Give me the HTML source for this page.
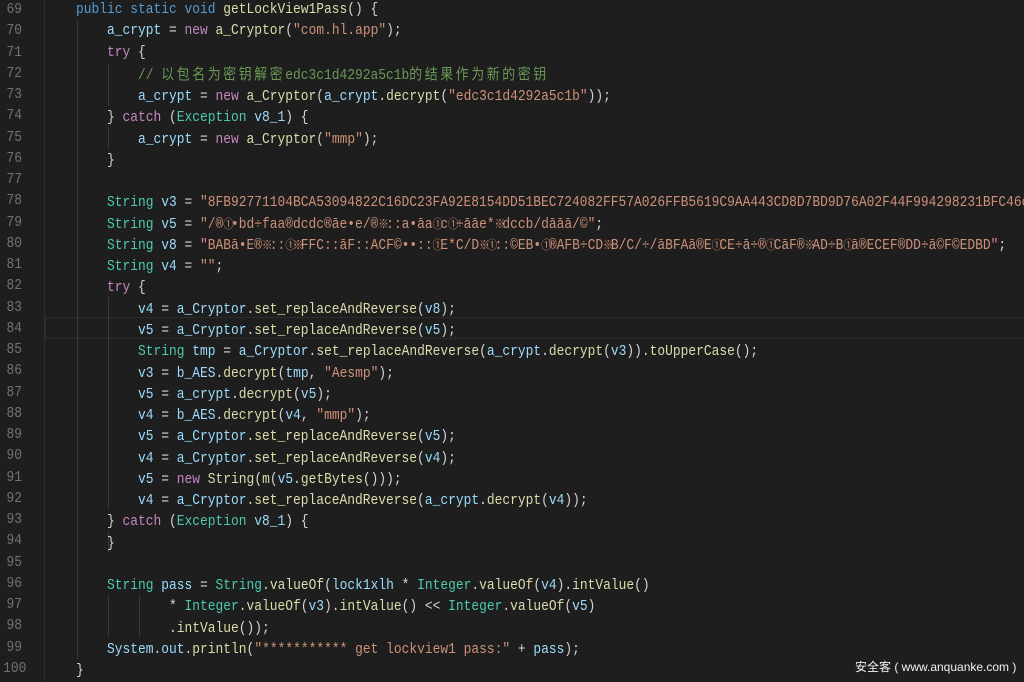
<!DOCTYPE html>
<html><head><meta charset="utf-8"><style>
html,body{margin:0;padding:0;background:#1e1e1e;width:1024px;height:682px;overflow:hidden;position:relative}
#nums{position:absolute;left:0;top:-1px;width:22px;text-align:right;font:15px/21.26px "Liberation Mono",monospace;color:#6e7278;transform:scaleX(.86);transform-origin:right}
#nums div{height:21.26px}
#code{position:absolute;left:45px;top:-1px;margin:0;font:15px/21.26px "Liberation Mono","Noto Sans CJK SC",monospace;color:#d4d4d4;transform:scaleX(.861);transform-origin:0 0;white-space:pre}
.k{color:#569cd6}.c{color:#c586c0}.s{color:#ce9178}.t{color:#4ec9b0}.v{color:#9cdcfe}.f{color:#dcdcaa}.m{color:#6a9955}
.cj{letter-spacing:3px;font-family:"Noto Sans CJK SC",sans-serif}
.n{display:inline-block;width:9px;text-align:center;font-size:12px;line-height:10px}
.g{position:absolute;width:1px;background:#3a3a3a}
#hl{position:absolute;left:45px;right:0;top:317px;height:20px;border:1px solid #2c2c2c;border-right:none}
#wm{position:absolute;left:855px;top:658px;font:12px "Liberation Sans","Noto Sans CJK SC",sans-serif;color:#f0f0f0}
</style></head><body>
<div class="g" style="left:44px;top:0;height:682px;background:#2e2e2e"></div>
<div id="hl"></div>
<div class="g" style="left:77px;top:21px;height:638px"></div>
<div class="g" style="left:108px;top:64px;height:42px"></div>
<div class="g" style="left:108px;top:127px;height:21px"></div>
<div class="g" style="left:108px;top:297px;height:212px"></div>
<div class="g" style="left:108px;top:531px;height:21px"></div>
<div class="g" style="left:108px;top:595px;height:42px"></div>
<div class="g" style="left:139px;top:595px;height:42px"></div>
<div id="nums"><div>69</div><div>70</div><div>71</div><div>72</div><div>73</div><div>74</div><div>75</div><div>76</div><div>77</div><div>78</div><div>79</div><div>80</div><div>81</div><div>82</div><div>83</div><div>84</div><div>85</div><div>86</div><div>87</div><div>88</div><div>89</div><div>90</div><div>91</div><div>92</div><div>93</div><div>94</div><div>95</div><div>96</div><div>97</div><div>98</div><div>99</div><div>100</div></div>
<pre id="code">    <span class="k">public static void</span> <span class="f">getLockView1Pass</span>() {
        <span class="v">a_crypt</span> = <span class="c">new</span> <span class="f">a_Cryptor</span>(<span class="s">"com.hl.app"</span>);
        <span class="c">try</span> {
            <span class="m">// <span class="cj">以包名为密钥解密</span>edc3c1d4292a5c1b<span class="cj">的结果作为新的密钥</span></span>
            <span class="v">a_crypt</span> = <span class="c">new</span> <span class="f">a_Cryptor</span>(<span class="v">a_crypt</span>.<span class="f">decrypt</span>(<span class="s">"edc3c1d4292a5c1b"</span>));
        } <span class="c">catch</span> (<span class="t">Exception</span> <span class="v">v8_1</span>) {
            <span class="v">a_crypt</span> = <span class="c">new</span> <span class="f">a_Cryptor</span>(<span class="s">"mmp"</span>);
        }

        <span class="t">String</span> <span class="v">v3</span> = <span class="s">"8FB92771104BCA53094822C16DC23FA92E8154DD51BEC724082FF57A026FFB5619C9AA443CD8D7BD9D76A02F44F994298231BFC46c</span>
        <span class="t">String</span> <span class="v">v5</span> = <span class="s">"/®<span class="n">①</span>•bd÷faa®dcdc®āe•e/®<span class="n">※</span>::a•āa<span class="n">①</span>c<span class="n">①</span>÷āāe*<span class="n">※</span>dccb/dāāā/©"</span>;
        <span class="t">String</span> <span class="v">v8</span> = <span class="s">"BABā•E®<span class="n">※</span>::<span class="n">①</span><span class="n">※</span>FFC::āF::ACF©••::<span class="n">①</span>E*C/D<span class="n">※</span><span class="n">①</span>::©EB•<span class="n">①</span>®AFB÷CD<span class="n">※</span>B/C/÷/āBFAā®E<span class="n">①</span>CE÷ā÷®<span class="n">①</span>CāF®<span class="n">※</span>AD÷B<span class="n">①</span>ā®ECEF®DD÷ā©F©EDBD"</span>;
        <span class="t">String</span> <span class="v">v4</span> = <span class="s">""</span>;
        <span class="c">try</span> {
            <span class="v">v4</span> = <span class="v">a_Cryptor</span>.<span class="f">set_replaceAndReverse</span>(<span class="v">v8</span>);
            <span class="v">v5</span> = <span class="v">a_Cryptor</span>.<span class="f">set_replaceAndReverse</span>(<span class="v">v5</span>);
            <span class="t">String</span> <span class="v">tmp</span> = <span class="v">a_Cryptor</span>.<span class="f">set_replaceAndReverse</span>(<span class="v">a_crypt</span>.<span class="f">decrypt</span>(<span class="v">v3</span>)).<span class="f">toUpperCase</span>();
            <span class="v">v3</span> = <span class="v">b_AES</span>.<span class="f">decrypt</span>(<span class="v">tmp</span>, <span class="s">"Aesmp"</span>);
            <span class="v">v5</span> = <span class="v">a_crypt</span>.<span class="f">decrypt</span>(<span class="v">v5</span>);
            <span class="v">v4</span> = <span class="v">b_AES</span>.<span class="f">decrypt</span>(<span class="v">v4</span>, <span class="s">"mmp"</span>);
            <span class="v">v5</span> = <span class="v">a_Cryptor</span>.<span class="f">set_replaceAndReverse</span>(<span class="v">v5</span>);
            <span class="v">v4</span> = <span class="v">a_Cryptor</span>.<span class="f">set_replaceAndReverse</span>(<span class="v">v4</span>);
            <span class="v">v5</span> = <span class="c">new</span> <span class="f">String</span>(<span class="f">m</span>(<span class="v">v5</span>.<span class="f">getBytes</span>()));
            <span class="v">v4</span> = <span class="v">a_Cryptor</span>.<span class="f">set_replaceAndReverse</span>(<span class="v">a_crypt</span>.<span class="f">decrypt</span>(<span class="v">v4</span>));
        } <span class="c">catch</span> (<span class="t">Exception</span> <span class="v">v8_1</span>) {
        }

        <span class="t">String</span> <span class="v">pass</span> = <span class="t">String</span>.<span class="f">valueOf</span>(<span class="v">lock1xlh</span> * <span class="t">Integer</span>.<span class="f">valueOf</span>(<span class="v">v4</span>).<span class="f">intValue</span>()
                * <span class="t">Integer</span>.<span class="f">valueOf</span>(<span class="v">v3</span>).<span class="f">intValue</span>() &lt;&lt; <span class="t">Integer</span>.<span class="f">valueOf</span>(<span class="v">v5</span>)
                .<span class="f">intValue</span>());
        <span class="v">System</span>.<span class="v">out</span>.<span class="f">println</span>(<span class="s">"*********** get lockview1 pass:"</span> + <span class="v">pass</span>);
    }</pre>
<div id="wm">安全客 ( www.anquanke.com )</div>
</body></html>
